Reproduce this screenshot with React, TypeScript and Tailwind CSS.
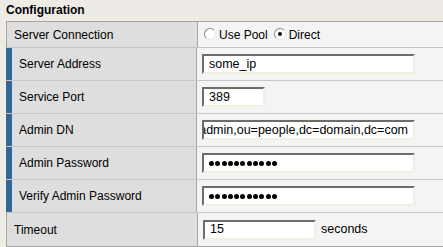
import React from 'react';

type Row = {
  label: string;
  accent: boolean;
  field: React.ReactNode;
};

function Field({ width, children }: { width: string; children?: React.ReactNode }) {
  return (
    <div
      className={`${width} h-[20px] flex items-center overflow-hidden bg-white border-2 border-t-[#6c6c68] border-l-[#6c6c68] border-b-[#f3efe7] border-r-[#f3efe7] pl-[5px] pr-[5px] text-[12.5px] text-black`}
    >
      {children}
    </div>
  );
}

function Dots({ count }: { count: number }) {
  return (
    <div className="flex items-center gap-[1.3px]">
      {Array.from({ length: count }).map((_, i) => (
        <span key={i} className="block w-[5px] h-[5px] rounded-full bg-black" />
      ))}
    </div>
  );
}

function Radio({ checked }: { checked?: boolean }) {
  return (
    <span className="relative -mt-[2px] inline-flex items-center justify-center w-[12px] h-[12px] rounded-full bg-white border border-t-[#8a8a8a] border-l-[#8a8a8a] border-b-[#e8e8e8] border-r-[#e8e8e8]">
      {checked && <span className="block w-[4px] h-[4px] rounded-full bg-black" />}
    </span>
  );
}

export default function App() {
  const rows: Row[] = [
    { label: 'Server Address', accent: true, field: <Field width="w-[213px]">some_ip</Field> },
    { label: 'Service Port', accent: true, field: <Field width="w-[63px]">389</Field> },
    {
      label: 'Admin DN',
      accent: true,
      field: (
        <Field width="w-[213px] justify-end">
          <span className="whitespace-nowrap">cn=admin,ou=people,dc=domain,dc=com</span>
        </Field>
      ),
    },
    {
      label: 'Admin Password',
      accent: true,
      field: (
        <Field width="w-[213px]">
          <Dots count={11} />
        </Field>
      ),
    },
    {
      label: 'Verify Admin Password',
      accent: true,
      field: (
        <Field width="w-[213px]">
          <Dots count={11} />
        </Field>
      ),
    },
    {
      label: 'Timeout',
      accent: false,
      field: (
        <div className="flex items-center gap-[5px]">
          <Field width="w-[113px]">15</Field>
          <span className="text-[12.5px] text-black">seconds</span>
        </div>
      ),
    },
  ];

  return (
    <div className="w-[443px] h-[247px] overflow-hidden bg-[#eeebe6] font-['Liberation_Sans',Arial,sans-serif] text-[12px] text-black">
      {/* Title */}
      <div className="pt-[3px] pl-[6px] mb-[3px] leading-[15px] font-bold">Configuration</div>

      {/* Config table */}
      <div className="ml-[6px] w-[460px] border border-[#a6a6a6]">
        <div className="flex h-[26px] border-b border-[#c2c2c2]">
          <div className="w-[190px] flex items-center pl-[7px] bg-[#dedede]">Server Connection</div>
          <div className="flex-1 flex items-center pl-[6px] bg-[#f4f4f4] border-l border-[#a6a6a6]">
            <Radio />
            <span className="ml-[3px] mr-[6px]">Use Pool</span>
            <Radio checked />
            <span className="ml-[3px]">Direct</span>
          </div>
        </div>

        {rows.map((row, i) => (
          <div
            key={row.label}
            className={`flex h-[33px] ${i < rows.length - 1 ? 'border-b border-[#c8c8c8]' : ''}`}
          >
            <div
              className={`flex items-center bg-[#dedede] ${
                row.accent ? 'w-[190px] -ml-[1px] border-l-[6px] border-[#336699] pl-[7px]' : 'w-[190px] pl-[7px]'
              }`}
            >
              {row.label}
            </div>
            <div className="flex-1 flex items-center pl-[5px] bg-[#f4f4f4] border-l border-[#a6a6a6]">
              {row.field}
            </div>
          </div>
        ))}
      </div>
    </div>
  );
}
